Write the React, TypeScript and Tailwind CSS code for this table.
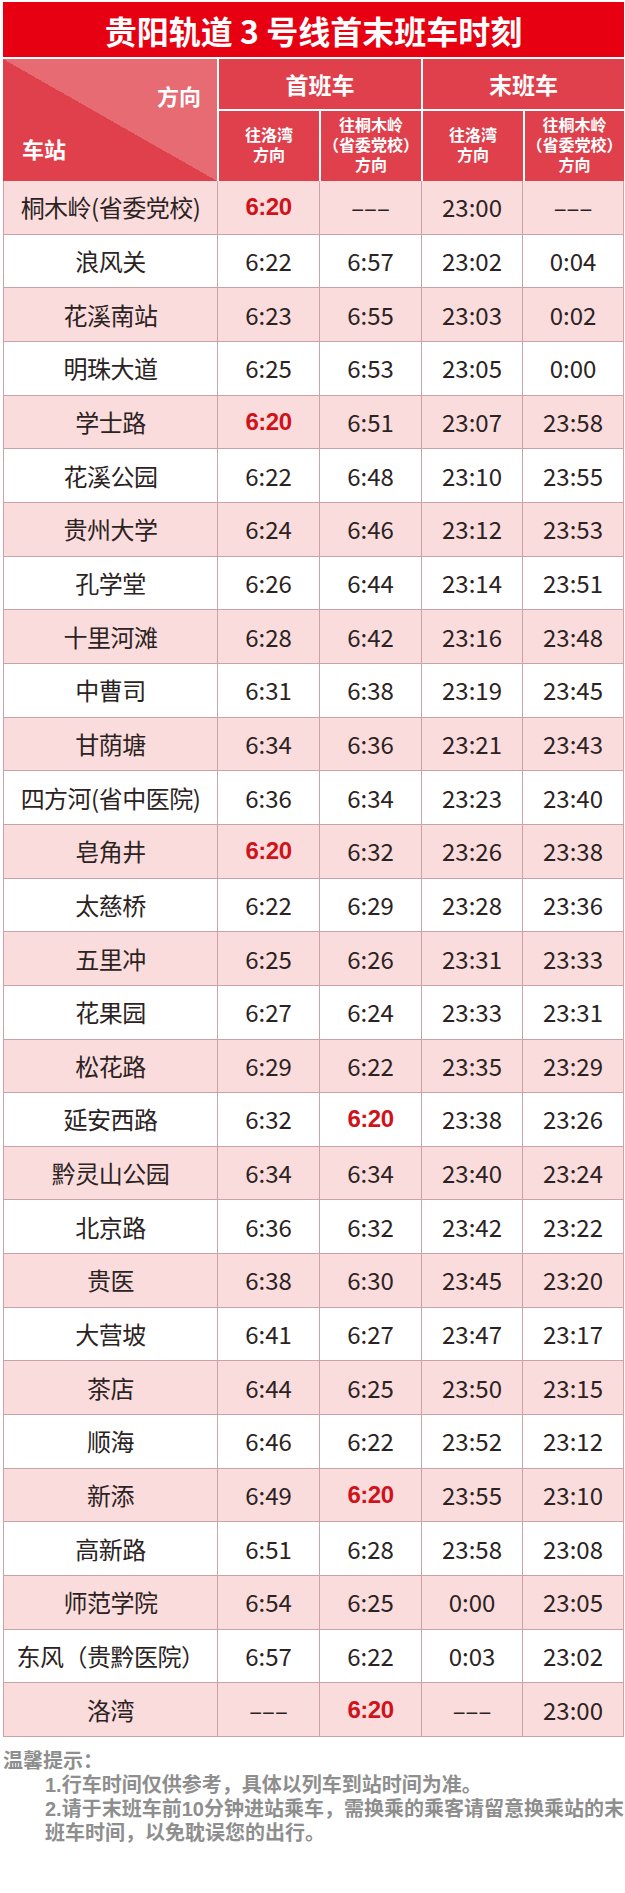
import React from 'react';

type Cell = string | { red: string };

const rows: [string, Cell, Cell, Cell, Cell][] = [
  ['桐木岭(省委党校)', { red: '6:20' }, '–––', '23:00', '–––'],
  ['浪风关', '6:22', '6:57', '23:02', '0:04'],
  ['花溪南站', '6:23', '6:55', '23:03', '0:02'],
  ['明珠大道', '6:25', '6:53', '23:05', '0:00'],
  ['学士路', { red: '6:20' }, '6:51', '23:07', '23:58'],
  ['花溪公园', '6:22', '6:48', '23:10', '23:55'],
  ['贵州大学', '6:24', '6:46', '23:12', '23:53'],
  ['孔学堂', '6:26', '6:44', '23:14', '23:51'],
  ['十里河滩', '6:28', '6:42', '23:16', '23:48'],
  ['中曹司', '6:31', '6:38', '23:19', '23:45'],
  ['甘荫塘', '6:34', '6:36', '23:21', '23:43'],
  ['四方河(省中医院)', '6:36', '6:34', '23:23', '23:40'],
  ['皂角井', { red: '6:20' }, '6:32', '23:26', '23:38'],
  ['太慈桥', '6:22', '6:29', '23:28', '23:36'],
  ['五里冲', '6:25', '6:26', '23:31', '23:33'],
  ['花果园', '6:27', '6:24', '23:33', '23:31'],
  ['松花路', '6:29', '6:22', '23:35', '23:29'],
  ['延安西路', '6:32', { red: '6:20' }, '23:38', '23:26'],
  ['黔灵山公园', '6:34', '6:34', '23:40', '23:24'],
  ['北京路', '6:36', '6:32', '23:42', '23:22'],
  ['贵医', '6:38', '6:30', '23:45', '23:20'],
  ['大营坡', '6:41', '6:27', '23:47', '23:17'],
  ['茶店', '6:44', '6:25', '23:50', '23:15'],
  ['顺海', '6:46', '6:22', '23:52', '23:12'],
  ['新添', '6:49', { red: '6:20' }, '23:55', '23:10'],
  ['高新路', '6:51', '6:28', '23:58', '23:08'],
  ['师范学院', '6:54', '6:25', '0:00', '23:05'],
  ['东风（贵黔医院）', '6:57', '6:22', '0:03', '23:02'],
  ['洛湾', '–––', { red: '6:20' }, '–––', '23:00'],
];

const font = { fontFamily: '"Noto Sans CJK SC", "Noto Sans", sans-serif' };
// latin-first stack keeps the line boxes tight for the small multi-line texts
const tight = { fontFamily: '"Liberation Sans", "Noto Sans CJK SC", sans-serif' };

function TimeCell({ value }: { value: Cell }) {
  if (typeof value !== 'string') {
    return (
      <div
        className="flex items-center justify-center border-r border-b border-[#c9a3a7] font-bold text-[24px] text-[#d0121b] tracking-[-0.5px]"
        style={tight}
      >
        {value.red}
      </div>
    );
  }
  return (
    <div className="flex items-center justify-center border-r border-b border-[#c9a3a7] text-[24px] text-[#2b2323]">
      {value}
    </div>
  );
}

function SubHead({ lines }: { lines: string[] }) {
  return (
    <div
      className="bg-[#e0404c] flex flex-col items-center justify-center text-white font-bold text-[16px] leading-[20px]"
      style={tight}
    >
      {lines.map((l) => (
        <span key={l}>{l}</span>
      ))}
    </div>
  );
}

export default function App() {
  return (
    <div className="w-[625px] min-h-[1893px] bg-white pt-[2px]" style={font}>
      <div className="ml-[3px] w-[621px]">
        {/* title */}
        <div className="h-[55px] bg-[#e60012] flex items-center justify-center text-white font-bold text-[32px] leading-none">
          贵阳轨道 3 号线首末班车时刻
        </div>

        {/* header */}
        <div className="mt-[2px] grid grid-cols-[214px_100px_100px_100px_99px] grid-rows-[50px_70px] gap-[2px] bg-white">
          <div className="row-span-2 relative bg-[linear-gradient(to_top_right,#e0404c_50%,#e66b73_50%)] text-white font-bold text-[22px]">
            <span className="absolute right-[16px] top-[25px] leading-none">方向</span>
            <span className="absolute left-[19px] top-[78px] leading-none">车站</span>
          </div>
          <div className="col-span-2 bg-[#e0404c] flex items-center justify-center text-white font-bold text-[23px]">
            首班车
          </div>
          <div className="col-span-2 bg-[#e0404c] flex items-center justify-center text-white font-bold text-[23px]">
            末班车
          </div>
          <SubHead lines={['往洛湾', '方向']} />
          <SubHead lines={['往桐木岭', '（省委党校）', '方向']} />
          <SubHead lines={['往洛湾', '方向']} />
          <SubHead lines={['往桐木岭', '（省委党校）', '方向']} />
        </div>

        {/* data rows */}
        <div className="border-l border-[#c9a3a7]">
          {rows.map((r, i) => (
            <div
              key={r[0]}
              className={
                'grid grid-cols-[214px_102px_102px_101px_101px] h-[53.66px] ' +
                (i % 2 === 0 ? 'bg-[#fbdcdc]' : 'bg-white')
              }
            >
              <div className="flex items-center justify-center border-r border-b border-[#c9a3a7] text-[24px] text-[#2b2323] whitespace-nowrap tracking-[-0.5px]">
                {r[0]}
              </div>
              <TimeCell value={r[1]} />
              <TimeCell value={r[2]} />
              <TimeCell value={r[3]} />
              <TimeCell value={r[4]} />
            </div>
          ))}
        </div>
      </div>

      {/* notes */}
      <div
        className="mt-[12px] pl-[3px] text-[20px] leading-[24px] font-bold text-[#8e8e8e] whitespace-nowrap"
        style={tight}
      >
        <div>温馨提示：</div>
        <div className="pl-[42px]">1.行车时间仅供参考，具体以列车到站时间为准。</div>
        <div className="pl-[42px]">2.请于末班车前10分钟进站乘车，需换乘的乘客请留意换乘站的末</div>
        <div className="pl-[42px]">班车时间，以免耽误您的出行。</div>
      </div>
    </div>
  );
}
